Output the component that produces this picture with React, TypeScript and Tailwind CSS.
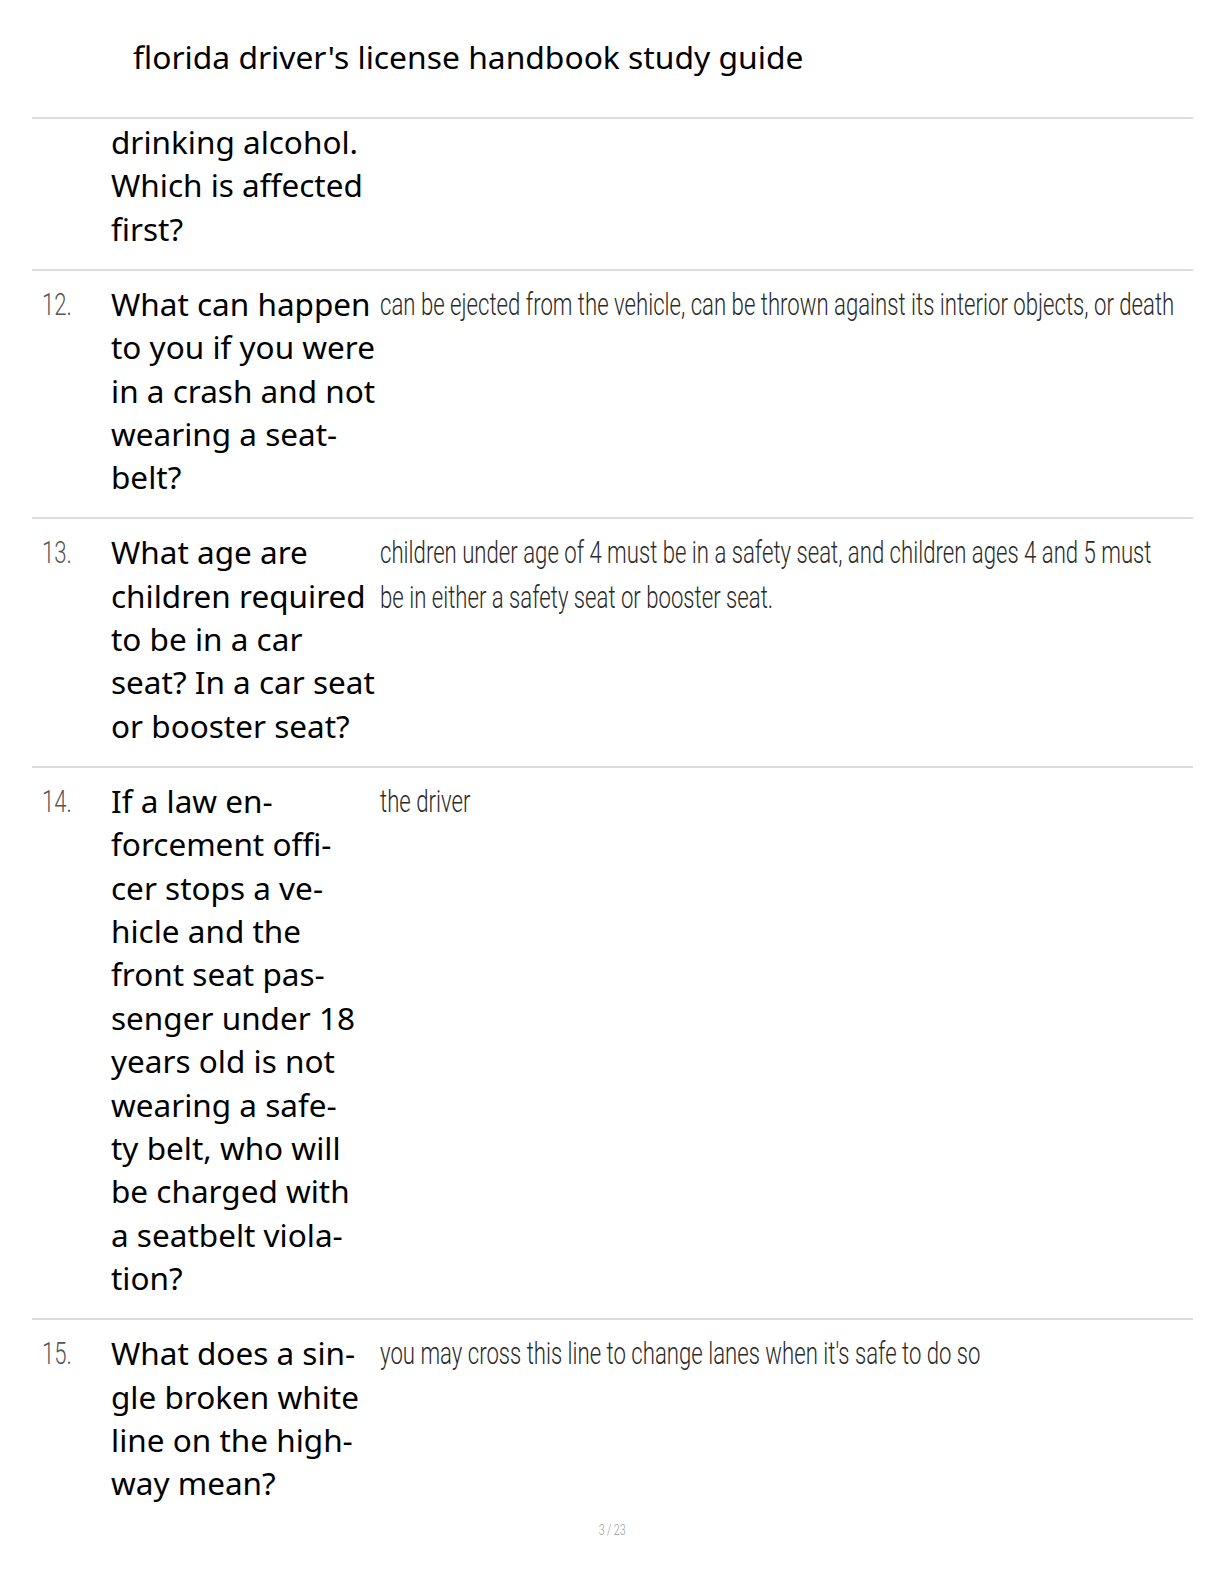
const rows = [
  {
    num: '',
    q: ['drinking alcohol.', 'Which is affected', 'first?'],
    a: [] as string[],
    top: true,
  },
  {
    num: '12.',
    q: ['What can happen', 'to you if you were', 'in a crash and not', 'wearing a seat-', 'belt?'],
    a: ['can be ejected from the vehicle, can be thrown against its interior objects, or death'],
  },
  {
    num: '13.',
    q: ['What age are', 'children required', 'to be in a car', 'seat? In a car seat', 'or booster seat?'],
    a: [
      'children under age of 4 must be in a safety seat, and children ages 4 and 5 must',
      'be in either a safety seat or booster seat.',
    ],
  },
  {
    num: '14.',
    q: [
      'If a law en-',
      'forcement offi-',
      'cer stops a ve-',
      'hicle and the',
      'front seat pas-',
      'senger under 18',
      'years old is not',
      'wearing a safe-',
      'ty belt, who will',
      'be charged with',
      'a seatbelt viola-',
      'tion?',
    ],
    a: ['the driver'],
  },
  {
    num: '15.',
    q: ['What does a sin-', 'gle broken white', 'line on the high-', 'way mean?'],
    a: ["you may cross this line to change lanes when it's safe to do so"],
  },
];

function Thin({ children }: { children: React.ReactNode }) {
  return (
    <span className="inline-block origin-left scale-x-[0.715] whitespace-nowrap font-['Roboto',sans-serif] font-light">
      {children}
    </span>
  );
}

export default function App() {
  return (
    <div className="relative h-[1584px] w-full overflow-hidden bg-white font-['Noto_Sans','Open_Sans',sans-serif] text-black">
      <div className="h-[117px] pl-[133px] pt-[35px]">
        <h1 className="whitespace-nowrap text-[31.8px] leading-[44px] font-normal">
          florida driver's license handbook study guide
        </h1>
      </div>
      <div className="ml-[32px] w-[1161px]">
        {rows.map((r, i) => (
          <div
            key={i}
            className={`flex border-t-2 border-[#dcdde3] text-[31.5px] leading-[43.4px] ${
              r.top ? 'pt-[1px] pb-[18.5px]' : 'pt-[11px] pb-[18.5px]'
            }`}
          >
            <div className="w-[79px] shrink-0 pl-[10px] text-[31px] text-[#555]">
              {r.num && <Thin>{r.num}</Thin>}
            </div>
            <div className="w-[269px] shrink-0 font-normal">
              {r.q.map((l, j) => (
                <div key={j} className="whitespace-nowrap">
                  {l}
                </div>
              ))}
            </div>
            <div className="min-w-0 flex-1 text-[31px] text-[#2a2a2a]">
              {r.a.map((l, j) => (
                <div key={j}>
                  <Thin>{l}</Thin>
                </div>
              ))}
            </div>
          </div>
        ))}
      </div>
      <div className="absolute left-0 right-0 top-[1518px] text-center text-[15px] text-[#999]">
        <span className="inline-block scale-x-[0.7] font-['Roboto',sans-serif] font-light">3 / 23</span>
      </div>
    </div>
  );
}
